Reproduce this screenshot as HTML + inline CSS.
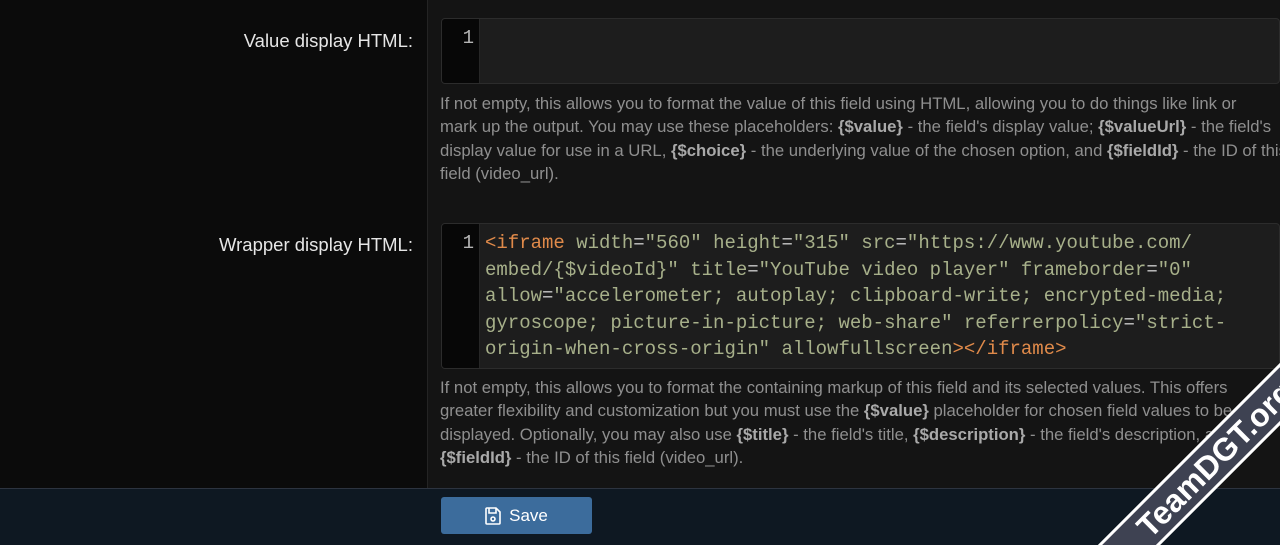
<!DOCTYPE html>
<html><head><meta charset="utf-8"><style>
html,body{margin:0;width:1280px;height:545px;overflow:hidden;background:#141414}
body{font-family:"Liberation Sans",Arial,sans-serif}
.wrap{position:relative;width:1280px;height:545px;overflow:hidden}
.left{position:absolute;left:0;top:0;width:427px;height:488px;background:#0b0b0b;border-right:1px solid #242424}
.lbl{position:absolute;right:867px;color:#e6e6e6;font-size:18.5px;text-align:right;white-space:nowrap}
.ed{position:absolute;left:441px;width:837px;background:#1d1d1d;border:1px solid #2c2c2c;border-radius:4px;overflow:hidden}
.gut{position:absolute;left:0;top:0;bottom:0;width:38px;background:#070707;border-right:1px solid #262626;color:#b5b5b5;font:19px "Liberation Mono",monospace;text-align:right;box-sizing:border-box;padding-right:5px;padding-top:8px}
.code{position:absolute;left:43px;top:6px;right:40px;font:19px/26.6px "Liberation Mono",monospace;color:#a7b08a;white-space:pre}
.t{color:#e08a4a}.e{color:#c8c8c8}
.hint{position:absolute;left:440px;width:840px;color:#8f8f8f;font-size:16.7px;line-height:23.4px;white-space:nowrap}
.hint b{color:#a9a9a9}
.foot{position:absolute;left:0;top:488px;width:1280px;height:57px;background:#0e1822;border-top:1px solid #2d3440}
.btn{position:absolute;left:441px;top:8px;width:151px;height:37px;background:#3c6c9c;border-radius:3px;color:#fff;font-size:17px;display:flex;align-items:center;justify-content:center;gap:8px}
.wm{position:absolute;left:1035px;top:437px;width:360px;height:38px;background:#3e4252;border-top:3px solid #fff;border-bottom:3px solid #fff;transform:rotate(-45deg);transform-origin:center;color:#fff;font-weight:bold;font-size:32px;text-align:center;line-height:38px}
</style></head><body><div class="wrap">
<div class="left"></div>
<div class="lbl" style="top:30px">Value display HTML:</div>
<div class="ed" style="top:18px;height:64px"><div class="gut">1</div></div>
<div class="hint" style="top:92px">If not empty, this allows you to format the value of this field using HTML, allowing you to do things like link or<br>mark up the output. You may use these placeholders: <b>{$value}</b> - the field's display value; <b>{$valueUrl}</b> - the field's<br>display value for use in a URL, <b>{$choice}</b> - the underlying value of the chosen option, and <b>{$fieldId}</b> - the ID of this<br>field (video_url).</div>
<div class="lbl" style="top:234px">Wrapper display HTML:</div>
<div class="ed" style="top:223px;height:144px"><div class="gut">1</div><div class="code"><span class="t">&lt;iframe</span> width<span class="e">=</span>"560" height<span class="e">=</span>"315" src<span class="e">=</span>"https://www.youtube.com/
embed/{$videoId}" title<span class="e">=</span>"YouTube video player" frameborder<span class="e">=</span>"0"
allow<span class="e">=</span>"accelerometer; autoplay; clipboard-write; encrypted-media;
gyroscope; picture-in-picture; web-share" referrerpolicy<span class="e">=</span>"strict-
origin-when-cross-origin" allowfullscreen<span class="t">&gt;&lt;/iframe&gt;</span></div></div>
<div class="hint" style="top:376px">If not empty, this allows you to format the containing markup of this field and its selected values. This offers<br>greater flexibility and customization but you must use the <b>{$value}</b> placeholder for chosen field values to be<br>displayed. Optionally, you may also use <b>{$title}</b> - the field's title, <b>{$description}</b> - the field's description, and<br><b>{$fieldId}</b> - the ID of this field (video_url).</div>
<div class="foot"><div class="btn"><svg width="16" height="18" viewBox="0 0 16 18" fill="none" stroke="#fff" stroke-width="1.6"><path d="M2 1h9l4 4v11a1 1 0 0 1-1 1H2a1 1 0 0 1-1-1V2a1 1 0 0 1 1-1z"/><path d="M4 1v5h7V1"/><circle cx="8" cy="12" r="2"/></svg>Save</div></div>
<div class="wm">TeamDGT.org</div>
</div></body></html>
